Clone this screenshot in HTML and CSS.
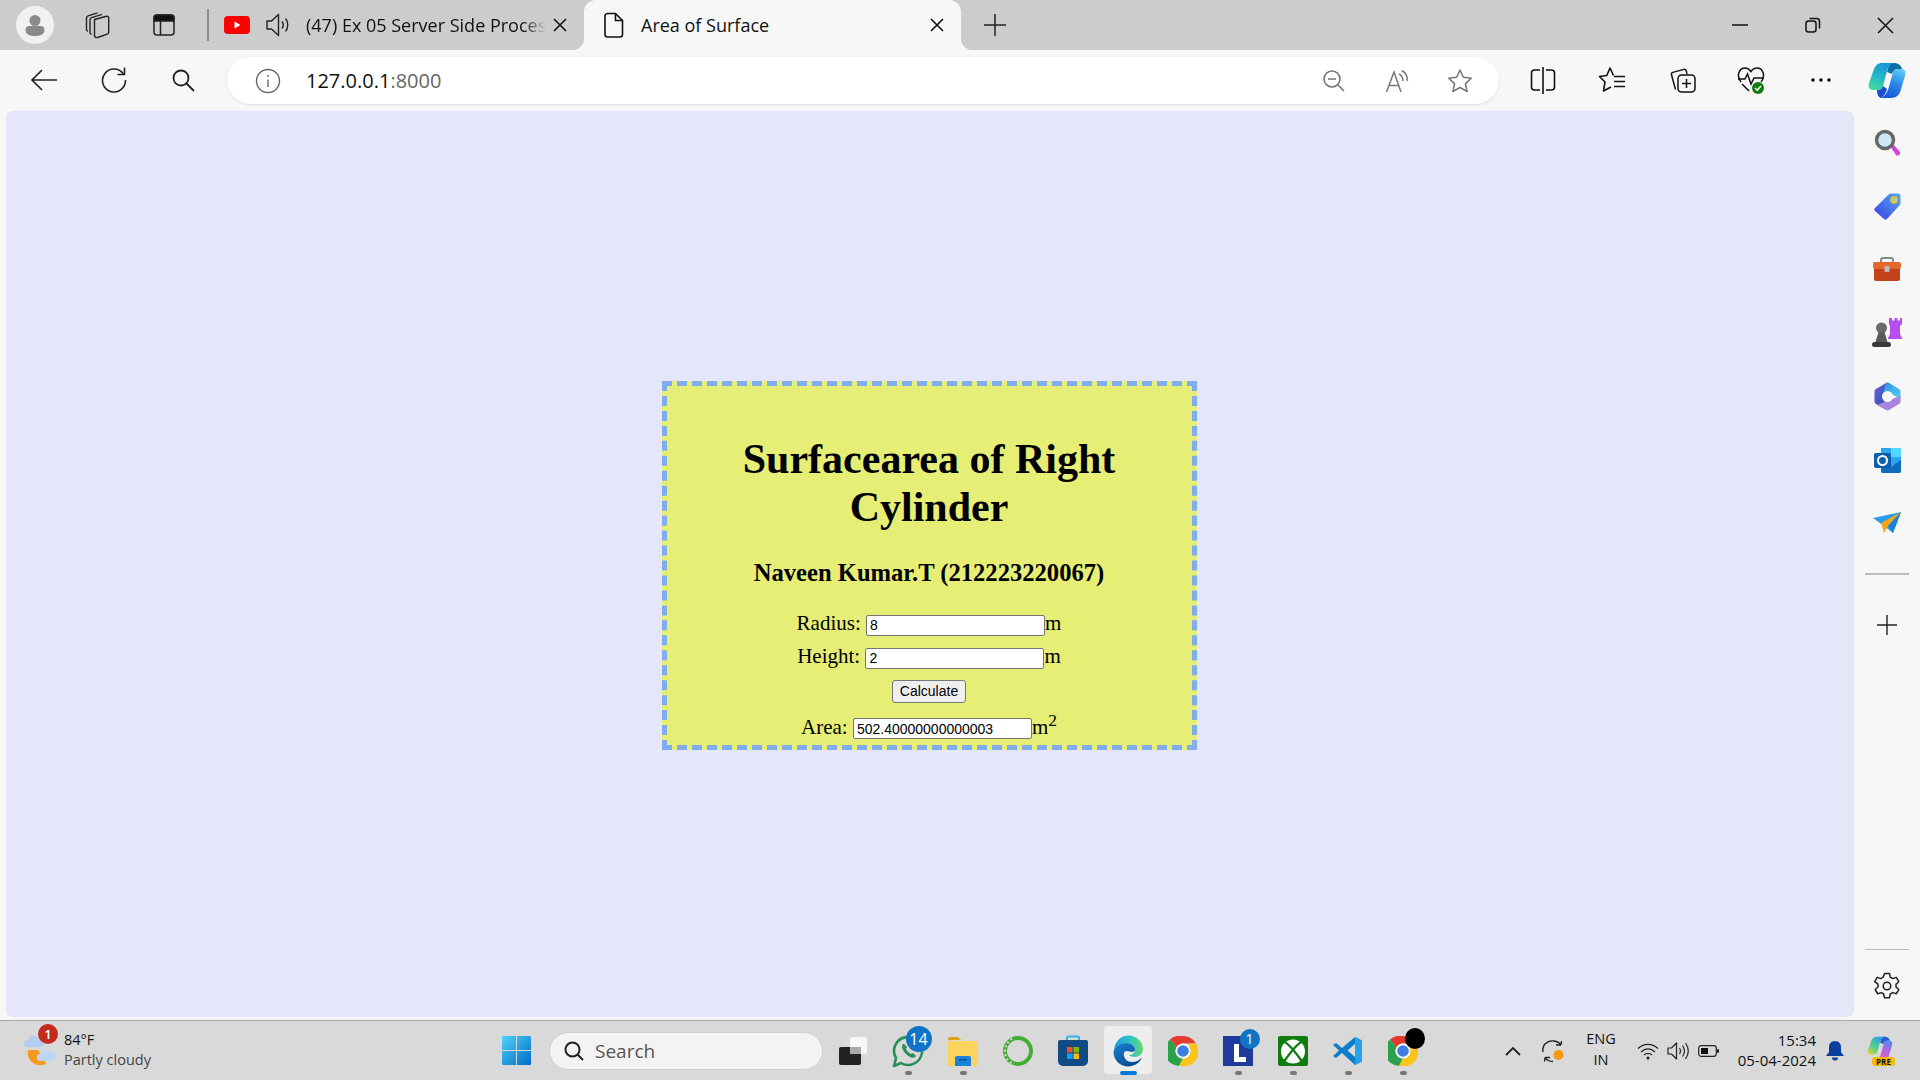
FILE: index.html
```html
<!DOCTYPE html>
<html lang="en">

<head>
    <meta charset="UTF-8">
    <title>Area of Surface</title>
    <link rel="stylesheet" href="styles.css">
</head>

<body>
    <!-- tab strip -->
    <div class="strip">
        <div class="profile">
            <svg width="24" height="24" viewBox="0 0 24 24"><circle cx="12" cy="7.5" r="5.5" fill="#8a8a8a"/><path d="M2.5 17a4 4 0 0 1 4-4h11a4 4 0 0 1 4 4c0 4-4 6-9.500 6s-9.500-2-9.500-6z" fill="#8a8a8a"/></svg>
        </div>
        <div class="strip-btn">
            <svg width="28" height="30" viewBox="0 0 28 30" fill="none" stroke="#222" stroke-width="1.400"><path d="M10.500 9.500l12-3.200c1.200-.3 2.200.4 2.200 1.600v14.300c0 1-.5 1.600-1.400 1.900l-9.800 3.400c-1.300.4-3-.4-3-1.800z"/><path d="M7.500 24.500c-1-.4-1.500-1.100-1.500-2.200V9.700c0-1 .6-1.800 1.600-2.100L18 4.400"/><path d="M3.800 21.500c-.8-.5-1.300-1.200-1.300-2.200V8c0-1.100.6-1.900 1.600-2.200l9.400-3"/></svg>
        </div>
        <div class="strip-btn">
            <svg width="26" height="26" viewBox="0 0 26 26" fill="none" stroke="#222" stroke-width="1.500"><rect x="3" y="3" width="20" height="20" rx="3"/><path d="M3 6a3 3 0 0 1 3-3h14a3 3 0 0 1 3 3v3H3z" fill="#111"/><path d="M9.500 9v14"/></svg>
        </div>
        <div class="tab-sep"></div>
        <div class="tab">
            <svg width="26" height="18" viewBox="0 0 26 18"><rect width="26" height="18" rx="4" fill="#f00"/><path d="M10.500 5.500l6 3.500-6 3.500z" fill="#fff"/></svg>
            <svg class="tab-sound" width="26" height="28" viewBox="0 0 26 28" fill="none" stroke="#222" stroke-width="1.400"><path d="M2 10h4.500l7-6.500v21l-7-6.500H2z" stroke-linejoin="round"/><path d="M17 10.500c1.500 2 1.500 5 0 7M20.500 7.500c3 3.500 3 9.500 0 13"/></svg>
            <span class="tab-title tab-fade">(47) Ex 05 Server Side Proces</span>
            <svg class="tab-close" width="14" height="14" viewBox="0 0 14 14" stroke="#111" stroke-width="1.600"><path d="M1 1l12 12M13 1L1 13"/></svg>
        </div>
        <div class="tab tab-active">
            <svg width="20" height="26" viewBox="0 0 20 26" fill="none" stroke="#111" stroke-width="1.600"><path d="M3.500 1.500h8l7 7v14a2.500 2.500 0 0 1-2.500 2.500H3.500A2.500 2.500 0 0 1 1 22.500V4a2.500 2.500 0 0 1 2.500-2.500z"/><path d="M11.500 1.500V8.500h7"/></svg>
            <span class="tab-title">Area of Surface</span>
            <svg class="tab-close" width="14" height="14" viewBox="0 0 14 14" stroke="#111" stroke-width="1.600"><path d="M1 1l12 12M13 1L1 13"/></svg>
        </div>
        <div class="new-tab">
            <svg width="24" height="24" viewBox="0 0 24 24" stroke="#222" stroke-width="1.500"><path d="M12 1v22M1 12h22"/></svg>
        </div>
        <div class="window-btns">
            <svg width="16" height="16" viewBox="0 0 16 16" stroke="#111" stroke-width="1.500"><path d="M0 8h16"/></svg>
            <svg width="16" height="16" viewBox="0 0 16 16" fill="none" stroke="#111" stroke-width="1.500"><rect x="1" y="4" width="10" height="11" rx="2.500"/><path d="M4.500 1.500h7a3 3 0 0 1 3 3v7"/></svg>
            <svg width="17" height="17" viewBox="0 0 17 17" stroke="#111" stroke-width="1.500"><path d="M1 1l15 15M16 1L1 16"/></svg>
        </div>
    </div>

    <!-- address bar row -->
    <div class="toolbar">
        <div class="tool">
            <svg width="28" height="24" viewBox="0 0 28 24" fill="none" stroke="#222" stroke-width="1.600"><path d="M27 12H2M12 2L2 12l10 10"/></svg>
        </div>
        <div class="tool">
            <svg width="28" height="28" viewBox="0 0 28 28" fill="none" stroke="#222" stroke-width="1.600"><path d="M23.500 8A11.500 11.500 0 1 0 25.500 14"/><path d="M24.500 1.500V8.500H17.500"/></svg>
        </div>
        <div class="tool tool-find">
            <svg width="24" height="24" viewBox="0 0 24 24" fill="none" stroke="#222" stroke-width="1.800"><circle cx="10" cy="10" r="7.500"/><path d="M15.500 15.500L23 23"/></svg>
        </div>
        <div class="address">
            <svg width="26" height="26" viewBox="0 0 26 26" fill="none" stroke="#666" stroke-width="1.400"><circle cx="13" cy="13" r="11.500"/><path d="M13 11.500v7.500M13 7v2"/></svg>
            <span class="url">127.0.0.1<span class="url-port">:8000</span></span>
            <div class="address-icons">
                <svg width="24" height="24" viewBox="-1 0 24 24" fill="none" stroke="#777" stroke-width="1.600"><circle cx="10" cy="10" r="8"/><path d="M6 10h8M16 16l6 6"/></svg>
                <svg width="26" height="24" viewBox="-2 0 26 24" fill="none" stroke="#777" stroke-width="1.500"><path d="M1.500 23L9 3l7 20M4 16.500h10"/><path d="M14 5c3 1.500 4 4 4 7M17 1.500c3.500 2 5.500 5.500 5.500 10.500"/></svg>
                <svg width="26" height="26" viewBox="0 0 26 26" fill="none" stroke="#777" stroke-width="1.500"><path d="M13 2l3.300 7.300 8 .9-5.900 5.400 1.700 7.900L13 19.500l-7.100 4 1.700-7.900-5.900-5.400 8-.9z" stroke-linejoin="round"/></svg>
            </div>
        </div>
        <div class="tool-group">
            <div class="tool2">
                <svg width="26" height="28" viewBox="0 0 26 28" fill="none" stroke="#111" stroke-width="1.600"><path d="M10 4H4.500A3 3 0 0 0 1.500 7v14a3 3 0 0 0 3 3H10M16 4h5.500a3 3 0 0 1 3 3v14a3 3 0 0 1-3 3H16M13 1v27"/></svg>
            </div>
            <div class="tool2">
                <svg width="28" height="28" viewBox="0 0 28 28" fill="none" stroke="#111" stroke-width="1.600"><path d="M15.500 9.500L12 2 8.800 9.500 1.500 10.500l5.500 5.500-1.500 9 7.500-4" stroke-linejoin="round"/><path d="M16 10.500h11M16 15.500h11M16 20.500h11"/></svg>
            </div>
            <div class="tool2">
                <svg width="28" height="28" viewBox="0 0 28 28" fill="none" stroke="#111" stroke-width="1.500"><rect x="10" y="9" width="17" height="17" rx="3.500"/><path d="M18.500 13v9M14 17.500h9"/><path d="M7.500 23.500L3.500 8.700c-.3-1 .3-2 1.300-2.300l11-3a2 2 0 0 1 2.500 1.500l.7 3"/></svg>
            </div>
            <div class="tool2 tool-health">
                <svg width="28" height="30" viewBox="0 0 28 30" fill="none" stroke="#111" stroke-width="1.500"><path d="M4 17c-5-6-2-14 4-14 3 0 5 2 6 3.500C15 5 17 3 20 3c6 0 9 8 4 14"/><path d="M1 14h7l2.500-5 3.500 10 3-6h10M5 19l7 7"/><circle cx="21" cy="23" r="6" fill="#107c10" stroke="none"/><path d="M18 23l2.200 2.200L24 21" stroke="#fff"/></svg>
            </div>
            <div class="tool2">
                <svg width="20" height="4" viewBox="0 0 20 4" fill="#111"><circle cx="2" cy="2" r="1.800"/><circle cx="10" cy="2" r="1.800"/><circle cx="18" cy="2" r="1.800"/></svg>
            </div>
            <div class="tool2 tool-copilot">
                <svg width="38" height="36" viewBox="0 0 38 36"><defs><linearGradient id="cp1" x1=".2" y1="1" x2=".6" y2="0"><stop offset="0" stop-color="#43dc9c"/><stop offset=".5" stop-color="#25b6c8"/><stop offset="1" stop-color="#1a96dc"/></linearGradient><linearGradient id="cp2" x1=".3" y1="1" x2=".7" y2="0"><stop offset="0" stop-color="#1456d8"/><stop offset=".55" stop-color="#2a8ae8"/><stop offset="1" stop-color="#5cc8f6"/></linearGradient></defs><path d="M22 1h4c4 0 7 2 8 6h-4c-3 0-5 2-6 5l-5-2c1-4 2-7 3-9z" fill="#0e6ea8"/><path d="M14 1h12c-4 1-6 4-7 8l-4 15c-1 3-3 4-6 4H5c-4 0-5-3-4-7L6 7c2-4 4-6 8-6z" fill="url(#cp1)"/><path d="M9 28c3 0 5-1 6-4l4 3c-1 4-3 7-6 9-3-1-4-4-4-8z" fill="#1c4ccf"/><path d="M34 7c3 0 4 3 3 7l-4 13c-1 6-5 9-10 9H12c4-1 6-4 8-8l4-14c1-5 3-7 6-7z" fill="url(#cp2)"/></svg>
            </div>
        </div>
    </div>

    <div class="view">
        <!-- the page itself -->
        <div class="page">
            <div class="panel">
                <h1>Surfacearea of Right Cylinder</h1>
                <h2>Naveen Kumar.T (212223220067)</h2>
                <form>
                    <div class="row">Radius: <input type="text" value="8">m</div>
                    <div class="row">Height: <input type="text" value="2">m</div>
                    <div class="row row-calc"><input class="calc" type="button" value="Calculate"></div>
                    <div class="row">Area: <input type="text" value="502.40000000000003">m<sup>2</sup></div>
                </form>
            </div>
        </div>

        <!-- edge sidebar -->
        <div class="sidebar">
            <div class="side-btn">
                <svg width="26" height="28" viewBox="0 0 26 28"><path d="M16 17l3-2 7 8c.5 1 0 2-1 3s-2 1-3 0z" fill="#d63fe0"/><circle cx="11" cy="11" r="8.500" fill="#cfe8f5" stroke="#666" stroke-width="3.500"/></svg>
            </div>
            <div class="side-btn">
                <svg width="27" height="27" viewBox="0 0 27 27"><defs><linearGradient id="tg" x1="0" y1="1" x2="1" y2="0"><stop offset="0" stop-color="#3b3fe0"/><stop offset="1" stop-color="#58a8f5"/></linearGradient></defs><path d="M1 15L14 2c1-1 2-1.500 3-1.500h7c1.500 0 2.500 1 2.500 2.500v7c0 1-.5 2-1.500 3L13 26c-1 1-2 1-3 0L1 18c-1-1-1-2 0-3z" fill="url(#tg)"/><circle cx="20" cy="7" r="2.800" fill="#9cc" stroke="#f5c518" stroke-width="1.800"/></svg>
            </div>
            <div class="side-btn">
                <svg width="30" height="24" viewBox="0 0 30 24"><path d="M9 6V3a2 2 0 0 1 2-2h8a2 2 0 0 1 2 2v3" fill="none" stroke="#888" stroke-width="2"/><path d="M1 7a2 2 0 0 1 2-2h24a2 2 0 0 1 2 2v3l-1 2H2l-1-2z" fill="#e3682a"/><path d="M2 12h26v10a2 2 0 0 1-2 2H4a2 2 0 0 1-2-2z" fill="#c4421a"/><rect x="12.500" y="9" width="5" height="6" rx="1" fill="#bbb"/></svg>
            </div>
            <div class="side-btn">
                <svg width="30" height="30" viewBox="0 0 30 30"><path d="M17 0h3v2.500h2.500V0h3v2.500H28V0h2v6l-2 2v8l2 4v1H16v-1l2-4V8l-1-2z" fill="#b64fee"/><circle cx="9.500" cy="10" r="5.500" fill="#6b6b6b"/><path d="M6.500 14h6l3 10h-12z" fill="#5a5a5a"/><rect y="24" width="19" height="5" rx="2.500" fill="#3a3a3a"/></svg>
            </div>
            <div class="side-btn">
                <svg width="27" height="29" viewBox="0 0 27 29"><defs><linearGradient id="ms1" x1="0" y1="0" x2="1" y2="1"><stop offset="0" stop-color="#6e5bd6"/><stop offset="1" stop-color="#2358b5"/></linearGradient><linearGradient id="ms2" x1="0" y1="0" x2="1" y2="1"><stop offset="0" stop-color="#2f8fe0"/><stop offset="1" stop-color="#57d0ef"/></linearGradient></defs><path d="M12 1L2 7c-1 .6-1.500 1.500-1.500 2.500v10c0 1 .5 2 1.500 2.500l5 3 6-8-2-8z" fill="url(#ms1)"/><path d="M12 1c1-.6 2-.6 3 0l10 6c1 .6 1.500 1.500 1.500 2.500V17L14 10l-5 2z" fill="url(#ms2)"/><path d="M26.500 14v5.500c0 1-.5 2-1.500 2.500l-10 6c-1 .6-2 .6-3 0l-9-5 12-5z" fill="#a884df"/><circle cx="13.500" cy="14.500" r="5.500" fill="#f7f7f7"/></svg>
            </div>
            <div class="side-btn">
                <svg width="27" height="26" viewBox="0 0 27 26"><path d="M7 1h18a2 2 0 0 1 2 2v21a2 2 0 0 1-2 2H9a2 2 0 0 1-2-2z" fill="#28a8ea"/><path d="M17 1h8a2 2 0 0 1 2 2v7H17z" fill="#50d9ff"/><path d="M7 14l10 6 10-7v11a2 2 0 0 1-2 2H9a2 2 0 0 1-2-2z" fill="#0f6cbd"/><rect y="6" width="17" height="15" rx="2" fill="#0a5fb0"/><circle cx="8.500" cy="13.500" r="4.500" fill="none" stroke="#fff" stroke-width="2"/></svg>
            </div>
            <div class="side-btn">
                <svg width="29" height="22" viewBox="0 0 29 22"><path d="M0 6l28-6-8 21-9-7z" fill="#2d9ce8"/><path d="M28 0L8 11l3 10 4-7z" fill="#f2a81d"/><path d="M28 0L15 14l5 7z" fill="#1f7fd1"/></svg>
            </div>
            <div class="side-rule"></div>
            <div class="side-add">
                <svg width="20" height="20" viewBox="0 0 20 20" stroke="#222" stroke-width="1.400"><path d="M10 0v20M0 10h20"/></svg>
            </div>
            <div class="side-bottom">
                <div class="side-rule side-rule-thin"></div>
                <svg width="28" height="28" viewBox="0 0 28 28" fill="none" stroke="#222" stroke-width="1.500"><path d="M11.500 1.500h5l.8 3.700 2.400 1.400 3.600-1.200 2.500 4.300-2.800 2.500v2.800l2.800 2.500-2.500 4.300-3.600-1.200-2.400 1.400-.8 3.700h-5l-.8-3.700-2.400-1.400-3.600 1.200-2.500-4.300 2.800-2.500v-2.800L1.700 9.700l2.500-4.300 3.600 1.200 2.400-1.400z" stroke-linejoin="round"/><circle cx="14" cy="14" r="3.800"/></svg>
            </div>
        </div>
    </div>

    <!-- windows taskbar -->
    <div class="taskbar">
        <div class="weather">
            <div class="weather-icon">
                <svg width="32" height="36" viewBox="0 0 32 36"><path d="M4 17c-2 9 6 17 15 15 1-.2 3-1 3-2L14 17z" fill="#f59a1c"/><path d="M3 14a3.500 3.500 0 0 1 1-7 6 6 0 0 1 11-1 4 4 0 0 1 2 8z" fill="#b4cdf0"/><path d="M17 28a3.500 3.500 0 0 1-1-7 6 6 0 0 1 10-2 4.500 4.500 0 0 1 2 9z" fill="#bcd6f6"/></svg>
                <span class="weather-badge">1</span>
            </div>
            <div class="weather-text">
                <span class="temp">84°F</span>
                <span class="sky">Partly cloudy</span>
            </div>
        </div>
        <svg class="win-logo" width="29" height="29" viewBox="0 0 29 29"><defs><linearGradient id="wn" x1="0" y1="0" x2="1" y2="1"><stop offset="0" stop-color="#4fd3fb"/><stop offset="1" stop-color="#0069c8"/></linearGradient></defs><path d="M0 1a1 1 0 0 1 1-1h13v14H0zM15 0h13a1 1 0 0 1 1 1v13H15zM0 15h14v14H1a1 1 0 0 1-1-1zM15 15h14v13a1 1 0 0 1-1 1H15z" fill="url(#wn)"/></svg>
        <div class="search">
            <svg width="20" height="20" viewBox="0 0 20 20" fill="none" stroke="#222" stroke-width="2"><circle cx="8.500" cy="8.500" r="7"/><path d="M13.500 13.500L19 19"/></svg>
            <span>Search</span>
        </div>
        <div class="apps">
            <div class="app">
                <svg width="30" height="30" viewBox="0 0 30 30"><rect x="12" y="1" width="17" height="17" rx="2" fill="#f7f7f7"/><rect x="1" y="11" width="22" height="18" rx="2" fill="#222"/><rect x="12" y="11" width="11" height="7" fill="#aaa"/></svg>
            </div>
            <div class="app">
                <svg width="32" height="34" viewBox="0 0 32 34" fill="none"><path d="M2 32l2-8a14 14 0 1 1 5 5z" stroke="#2a8f57" stroke-width="2.600" stroke-linejoin="round"/><path d="M11 10c-2 2-1 6 3 10s8 5 10 2l-3-3-2 1c-2-1-4-3-5-5l1-2-3-3z" fill="#2a8f57"/></svg>
                <span class="badge badge-wide">14</span>
                <span class="dot"></span>
            </div>
            <div class="app">
                <svg width="30" height="30" viewBox="0 0 30 30"><path d="M0 3a2 2 0 0 1 2-2h8l3 3H0z" fill="#d9a21b"/><path d="M0 5h28a2 2 0 0 1 2 2v21a2 2 0 0 1-2 2H2a2 2 0 0 1-2-2z" fill="#fbd45e"/><path d="M7 22a2 2 0 0 1 2-2h12a2 2 0 0 1 2 2v8H7z" fill="#1a82d8"/><rect x="11" y="23" width="8" height="1.500" fill="#0b4f91"/></svg>
                <span class="dot"></span>
            </div>
            <div class="app">
                <svg width="30" height="32" viewBox="0 0 30 32" fill="none"><circle cx="15" cy="16" r="13" stroke="#45ad33" stroke-width="4"/><path d="M9 3.500C3 8 1 14 2.500 20S8 28 11 29" stroke="#d7d7d7" stroke-width="2" stroke-dasharray="2 2.500"/></svg>
            </div>
            <div class="app">
                <svg width="30" height="32" viewBox="0 0 30 32"><path d="M9 6V3a1.500 1.500 0 0 1 1.500-1.500h9A1.500 1.500 0 0 1 21 3v3" fill="none" stroke="#30b5e6" stroke-width="2"/><path d="M0 7a2 2 0 0 1 2-2h26a2 2 0 0 1 2 2v19a5 5 0 0 1-5 5H5a5 5 0 0 1-5-5z" fill="#124a86"/><rect x="9" y="12" width="5.500" height="5.500" fill="#f25022"/><rect x="15.500" y="12" width="5.500" height="5.500" fill="#7fba00"/><rect x="9" y="18.500" width="5.500" height="5.500" fill="#00a4ef"/><rect x="15.500" y="18.500" width="5.500" height="5.500" fill="#ffb900"/></svg>
            </div>
            <div class="app app-active">
                <svg width="30" height="32" viewBox="0 0 30 32"><defs><linearGradient id="ed1" x1="0" y1=".5" x2="1" y2=".5"><stop offset="0" stop-color="#1a9ad8"/><stop offset=".5" stop-color="#2cc0c8"/><stop offset="1" stop-color="#66d874"/></linearGradient><linearGradient id="ed2" x1="0" y1="0" x2=".6" y2="1"><stop offset="0" stop-color="#1a82d0"/><stop offset="1" stop-color="#0b4a90"/></linearGradient></defs><path d="M1 15C2 6 8 .5 15.500 .5 24 .5 30 7 30 14c0 5-4 8-8 8-3 0-5-1-6-2 3 0 6-2 6-5.500S18 8 13 8C7 8 2 11 .5 17z" fill="url(#ed1)"/><path d="M.5 17C2 11 7 8 13 8c5 0 9 3 9 6.500 0 1.500-1 2.500-3 2.500-3 0-7-2-8 1-1 4 2 9 8 9 4 0 8-2 10-5-2 6-8 9.500-14 9.500C7 31.500 .5 25 .5 17z" fill="url(#ed2)"/></svg>
                <span class="dot dot-active"></span>
            </div>
            <div class="app">
                <svg class="chrome" width="30" height="30" viewBox="0 0 30 30"><path d="M15 0a15 15 0 0 1 13 7.500H15a7.500 7.500 0 0 0-6.500 3.750L2 3.500A15 15 0 0 1 15 0z" fill="#e33b2e"/><path d="M2 3.500l6.500 7.750a7.500 7.500 0 0 0 6.500 11.250L11 30A15 15 0 0 1 2 3.500z" fill="#2aa14a"/><path d="M28 7.500A15 15 0 0 1 11 30l4-7.500a7.500 7.500 0 0 0 6.500-11.250L21 7.500z" fill="#fcc419"/><circle cx="15" cy="15" r="7.500" fill="#fff"/><circle cx="15" cy="15" r="5.800" fill="#3c7fe0"/></svg>
            </div>
            <div class="app">
                <svg width="30" height="30" viewBox="0 0 30 30"><rect width="30" height="30" fill="#1e3a9c"/><path d="M11 8h5v13h7v5H11z" fill="#fff"/></svg>
                <span class="badge">1</span>
                <span class="dot"></span>
            </div>
            <div class="app">
                <svg width="30" height="30" viewBox="0 0 30 30"><rect width="30" height="30" rx="2" fill="#107c10"/><circle cx="15" cy="15.500" r="12" fill="#fff"/><path d="M6.500 6C11 8 15.500 13.500 24 25.500M23.500 6C19 8 14.500 13.500 6 25.500" fill="none" stroke="#107c10" stroke-width="2.400"/></svg>
                <span class="dot"></span>
            </div>
            <div class="app">
                <svg width="30" height="30" viewBox="0 0 30 30"><path d="M22 1l7 3.500v21L22 29l-13-12-6 5-3-2 6-5.500L0 9l3-2 6 5z" fill="#0e7ecb"/><path d="M22 1l7 3.500v21L22 29z" fill="#25a3ea"/><path d="M22 8l-7.500 6.500L22 21z" fill="#dcdcdc"/></svg>
                <span class="dot"></span>
            </div>
            <div class="app">
                <svg class="chrome" width="30" height="30" viewBox="0 0 30 30"><path d="M15 0a15 15 0 0 1 13 7.500H15a7.500 7.500 0 0 0-6.500 3.750L2 3.500A15 15 0 0 1 15 0z" fill="#e33b2e"/><path d="M2 3.500l6.500 7.750a7.500 7.500 0 0 0 6.500 11.250L11 30A15 15 0 0 1 2 3.500z" fill="#2aa14a"/><path d="M28 7.500A15 15 0 0 1 11 30l4-7.500a7.500 7.500 0 0 0 6.500-11.250L21 7.500z" fill="#fcc419"/><circle cx="15" cy="15" r="7.500" fill="#fff"/><circle cx="15" cy="15" r="5.800" fill="#3c7fe0"/></svg>
                <span class="blob"></span>
                <span class="dot"></span>
            </div>
        </div>
        <div class="tray">
            <div class="tray-slot tray-chevron">
                <svg width="16" height="10" viewBox="0 0 16 10" fill="none" stroke="#222" stroke-width="1.800"><path d="M1 9l7-7 7 7"/></svg>
            </div>
            <div class="tray-slot tray-sync">
                <svg width="24" height="24" viewBox="0 0 24 24"><g fill="none" stroke="#222" stroke-width="1.400"><path d="M20 6C17 1.500 9 0 4 5 2 7 1.500 11 2 13M20 6l.5-4M20 6h-5"/><path d="M4 18.500c1.500 2.500 4 4 8 4M4 18.500l-.5 4M4 18.500h5"/></g><circle cx="17.500" cy="16" r="5" fill="#f59a0c"/></svg>
            </div>
            <div class="tray-slot tray-lang">
                <span>ENG</span>
                <span>IN</span>
            </div>
            <div class="tray-slot tray-net">
                <svg width="22" height="18" viewBox="0 0 22 18" fill="none" stroke="#222" stroke-width="1.300"><path d="M1 6.500c6-5.500 14-5.500 20 0M4 10c4.500-4 9.500-4 14 0M7 13c2.500-2 5.500-2 8 0"/><circle cx="11" cy="16" r="1.500" fill="#222" stroke="none"/></svg>
            </div>
            <div class="tray-slot">
                <svg width="22" height="20" viewBox="0 0 22 20" fill="none" stroke="#222" stroke-width="1.200"><path d="M1 7h3.500l5-5v16l-5-5H1z" stroke-linejoin="round"/><path d="M12.500 7c1.300 2 1.300 4 0 6M15.500 4.500c2.500 3.500 2.500 7.500 0 11M18.500 2c3.500 5 3.500 11 0 16"/></svg>
            </div>
            <div class="tray-slot">
                <svg width="21" height="12" viewBox="0 0 21 12"><rect x=".7" y=".7" width="17.600" height="10.600" rx="2.500" fill="none" stroke="#222" stroke-width="1.200"/><rect x="3" y="3" width="7" height="6" fill="#111"/><rect x="19" y="4" width="2" height="4" rx="1" fill="#222"/></svg>
            </div>
            <div class="clock">
                <span>15:34</span>
                <span>05-04-2024</span>
            </div>
            <div class="tray-slot tray-bell">
                <svg width="18" height="20" viewBox="0 0 18 20" fill="#0b3f9e"><path d="M9 0c4 0 6 3 6 6v5l3 4H0l3-4V6c0-3 2-6 6-6z"/><path d="M6 16.500h6a3 3 0 0 1-6 0z"/></svg>
            </div>
            <div class="tray-slot tray-pre">
                <svg width="28" height="24" viewBox="0 0 38 36"><defs><linearGradient id="pr1" x1=".1" y1="1" x2=".7" y2="0"><stop offset="0" stop-color="#e0d640"/><stop offset=".45" stop-color="#4fcf8c"/><stop offset="1" stop-color="#2b9fe8"/></linearGradient><linearGradient id="pr2" x1=".3" y1="1" x2=".7" y2="0"><stop offset="0" stop-color="#ef5fb8"/><stop offset=".6" stop-color="#a868e8"/><stop offset="1" stop-color="#4d8cf0"/></linearGradient></defs><path d="M22 1h4c4 0 7 2 8 6h-4c-3 0-5 2-6 5l-5-2c1-4 2-7 3-9z" fill="#2a5fd0"/><path d="M14 1h12c-4 1-6 4-7 8l-4 15c-1 3-3 4-6 4H5c-4 0-5-3-4-7L6 7c2-4 4-6 8-6z" fill="url(#pr1)"/><path d="M34 7c3 0 4 3 3 7l-4 13c-1 6-5 9-10 9H12c4-1 6-4 8-8l4-14c1-5 3-7 6-7z" fill="url(#pr2)"/></svg>
                <span class="pre-tag">PRE</span>
            </div>
        </div>
    </div>
</body>

</html>
```

FILE: styles.css
```css
* {
    box-sizing: border-box;
}

body {
    margin: 0;
    width: 1920px;
    height: 1080px;
    overflow: hidden;
    display: flex;
    flex-direction: column;
    background: #f7f7f7;
    font-family: "Open Sans", "Noto Sans", sans-serif;
    color: #111;
}

svg {
    display: block;
    flex: none;
}

/* tab strip */
.strip {
    height: 50px;
    background: #cccccc;
    display: flex;
    align-items: center;
    flex: none;
}

.profile {
    width: 38px;
    height: 38px;
    margin-left: 16px;
    border-radius: 50%;
    background: #f1f1f1;
    display: flex;
    align-items: center;
    justify-content: center;
}

.strip-btn {
    width: 66px;
    display: flex;
    justify-content: center;
}

.strip-btn:nth-child(2) {
    margin-left: 11px;
}

.tab-sep {
    width: 2px;
    height: 32px;
    background: #8e8e8e;
    margin: 0 15px 0 10px;
}

.tab {
    width: 360px;
    height: 50px;
    display: flex;
    align-items: center;
    flex: none;
}

.tab-sound {
    margin-left: 15px;
}

.tab-title {
    font-size: 18px;
    margin-left: 15px;
    white-space: nowrap;
}

.tab-fade {
    -webkit-mask-image: linear-gradient(to right, #000 90%, transparent);
    mask-image: linear-gradient(to right, #000 90%, transparent);
}

.tab-close {
    margin-left: auto;
    margin-right: 17px;
}

.tab-active {
    width: 377px;
    background: #f7f7f7;
    border-radius: 12px 12px 0 0;
    padding-left: 20px;
    position: relative;
}

.tab-active .tab-title {
    margin-left: 17px;
}

.tab-active::before,
.tab-active::after {
    content: "";
    position: absolute;
    bottom: 0;
    width: 12px;
    height: 12px;
}

.tab-active::before {
    left: -12px;
    background: radial-gradient(circle at 0 0, transparent 12px, #f7f7f7 12.500px);
}

.tab-active::after {
    right: -12px;
    background: radial-gradient(circle at 100% 0, transparent 12px, #f7f7f7 12.500px);
}

.new-tab {
    margin-left: 22px;
}

.window-btns {
    margin-left: auto;
    width: 188px;
    padding-right: 26px;
    display: flex;
    justify-content: space-between;
    align-items: center;
}

/* toolbar */
.toolbar {
    height: 60px;
    flex: none;
    padding-left: 9px;
    display: flex;
    align-items: center;
}

.tool {
    width: 70px;
    display: flex;
    justify-content: center;
}

.tool-find {
    padding-right: 2px;
}

.address {
    width: 1272px;
    height: 47px;
    margin-left: 8px;
    margin-top: 1px;
    border-radius: 24px;
    background: #fff;
    box-shadow: 0 1px 3px rgba(0, 0, 0, .1);
    padding-left: 28px;
    display: flex;
    align-items: center;
}

.url {
    font-size: 20px;
    margin-left: 25px;
    color: #111;
}

.url-port {
    color: #666;
}

.address-icons {
    margin-left: auto;
    display: flex;
    align-items: center;
    gap: 38px;
    padding-right: 26px;
}

.tool-group {
    margin-left: 9px;
    display: flex;
    align-items: center;
}

.tool2 {
    width: 69.500px;
    display: flex;
    justify-content: center;
}

.tool-copilot {
    width: 63px;
}

/* page area */
.view {
    height: 910px;
    flex: none;
    display: flex;
}

.page {
    width: 1848px;
    height: 906px;
    margin: 1px 0 0 6px;
    background: #e6e6fa;
    border-radius: 8px;
    box-shadow: 0 0 1px rgba(0, 0, 0, .1);
    padding-top: 270px;
    padding-right: 2px;
    font-family: "Liberation Serif", "Times New Roman", serif;
    color: #000;
}

.panel {
    width: 535px;
    height: 369px;
    margin: 0 auto;
    background: #e6ee75;
    border: 5px dashed #7fadf0;
    padding-top: 21px;
    text-align: center;
    font-size: 21px;
}

.panel h1 {
    font-size: 42px;
    margin: 28px 0;
}

.panel h2 {
    font-size: 24.600px;
    margin: 21px 0 24px;
}

.row {
    margin-bottom: 8px;
}

.row-calc {
    margin-bottom: 12px;
}

.row input[type="text"] {
    width: 179px;
    height: 21px;
    padding: 1px 3px;
    border: 1px solid #767676;
    border-radius: 2px;
    background: #fff;
    font-family: "Liberation Sans", Arial, sans-serif;
    font-size: 14px;
}

.calc {
    width: 74px;
    height: 23px;
    padding: 0;
    border: 1px solid #767676;
    border-radius: 3px;
    background: #efefef;
    font-family: "Liberation Sans", Arial, sans-serif;
    font-size: 14px;
    color: #000;
}

.row sup {
    font-size: 17.500px;
    line-height: 0;
}

/* sidebar */
.sidebar {
    flex: 1;
    height: 910px;
    padding-top: 1px;
    display: flex;
    flex-direction: column;
    align-items: center;
}

.side-btn {
    height: 63.400px;
    flex: none;
    display: flex;
    align-items: center;
    justify-content: center;
}

.side-rule {
    width: 44px;
    height: 2px;
    background: #bdbdbd;
    margin-top: 18px;
    flex: none;
}

.side-rule-thin {
    height: 1px;
    margin: 0 0 22px;
}

.side-add {
    margin-top: 40px;
}

.side-bottom {
    margin-top: auto;
    padding-bottom: 20px;
    display: flex;
    flex-direction: column;
    align-items: center;
}

/* taskbar */
.taskbar {
    height: 60px;
    flex: none;
    background: #d9d9d9;
    border-top: 1px solid #a9a9a9;
    display: flex;
    align-items: center;
}

.weather {
    width: 502px;
    padding-left: 24px;
    display: flex;
    align-items: center;
    flex: none;
}

.weather-icon {
    position: relative;
    width: 40px;
}

.weather-badge {
    position: absolute;
    left: 14px;
    top: -9px;
    width: 20px;
    height: 20px;
    border-radius: 50%;
    background: #c42b1c;
    color: #fff;
    font-size: 13px;
    font-weight: 600;
    line-height: 20px;
    text-align: center;
}

.weather-text {
    display: flex;
    flex-direction: column;
    font-size: 14.500px;
    line-height: 20.500px;
    margin-bottom: 1px;
}

.sky {
    color: #444;
}

.search {
    width: 274px;
    height: 38px;
    margin-left: 18px;
    border-radius: 19px;
    background: #f3f3f3;
    border: 1px solid #cfcfcf;
    padding-left: 14px;
    display: flex;
    align-items: center;
    gap: 11px;
    font-size: 19px;
    color: #555;
    flex: none;
}

.apps {
    margin-left: 2.500px;
    display: flex;
    flex: none;
}

.app {
    width: 55px;
    height: 59px;
    position: relative;
    display: flex;
    align-items: center;
    justify-content: center;
}

.app-active::before {
    content: "";
    position: absolute;
    left: 3.500px;
    top: 5px;
    width: 48px;
    height: 48px;
    border-radius: 4px;
    background: #eeeeee;
}

.app-active svg {
    position: relative;
}

.badge {
    position: absolute;
    left: 29px;
    top: 8px;
    min-width: 20px;
    height: 20px;
    border-radius: 10px;
    background: #0f74c8;
    color: #fff;
    font-size: 14px;
    line-height: 20px;
    text-align: center;
}

.badge-wide {
    left: 25px;
    top: 5px;
    width: 26px;
    height: 26px;
    border-radius: 13px;
    font-size: 16px;
    line-height: 26px;
}

.blob {
    position: absolute;
    left: 29px;
    top: 7px;
    width: 20px;
    height: 21px;
    border-radius: 50%;
    background: #000;
}

.dot {
    position: absolute;
    left: 24px;
    top: 50px;
    width: 7px;
    height: 4px;
    border-radius: 2px;
    background: #777;
}

.dot-active {
    left: 19px;
    width: 17px;
    background: #0078d4;
}

.tray {
    margin-left: auto;
    padding-right: 14px;
    display: flex;
    align-items: center;
    flex: none;
}

.tray-slot {
    width: 30px;
    display: flex;
    flex-direction: column;
    align-items: center;
    justify-content: center;
    position: relative;
}

.tray-chevron {
    width: 36px;
}

.tray-sync {
    width: 44px;
}

.tray-lang {
    width: 52px;
    margin-right: 6px;
    font-size: 14.500px;
    line-height: 20.500px;
    margin-bottom: 2px;
}

.clock {
    width: 93px;
    display: flex;
    flex-direction: column;
    align-items: flex-end;
    font-size: 15px;
    line-height: 20.500px;
    margin-bottom: 1px;
}

.tray-bell {
    width: 38px;
}

.tray-pre {
    width: 52px;
    padding-bottom: 6px;
}

.pre-tag {
    position: absolute;
    left: 18px;
    bottom: 0;
    width: 23px;
    height: 9px;
    border-radius: 3px;
    background: #f5b90f;
    font-size: 8px;
    font-weight: 700;
    line-height: 9px;
    text-align: center;
}
```
